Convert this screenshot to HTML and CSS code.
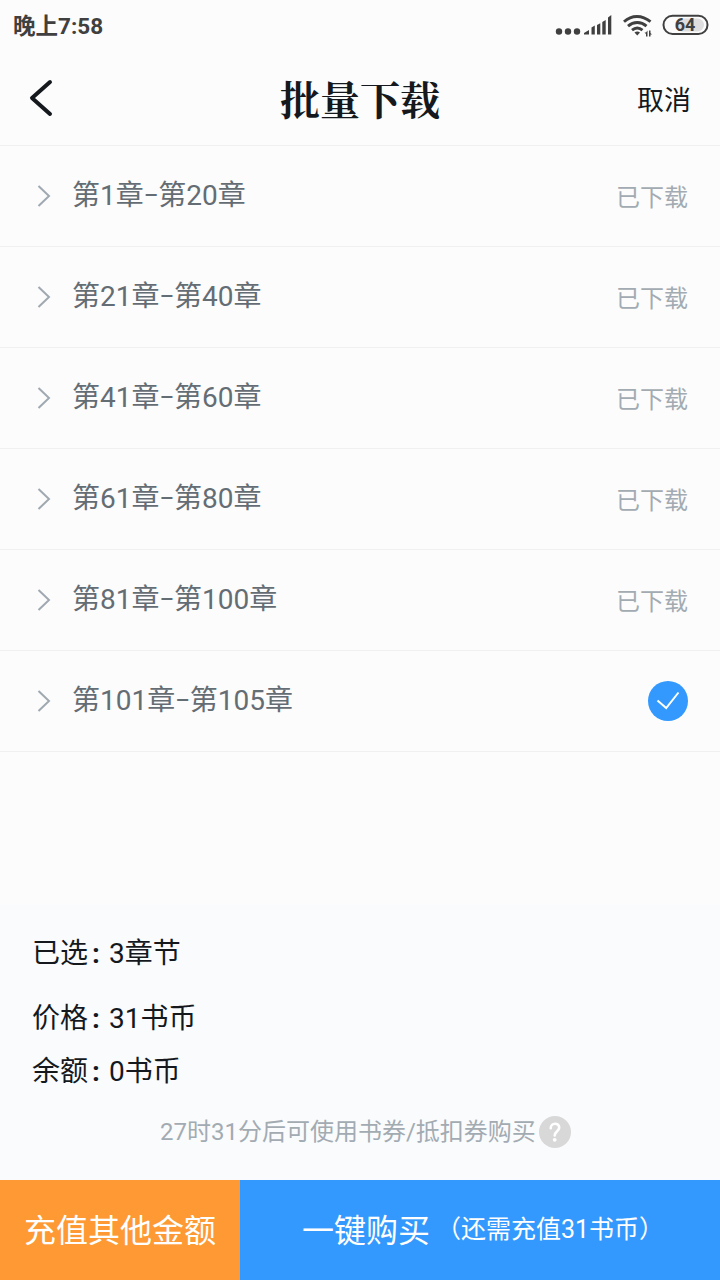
FILE: index.html
```
<!DOCTYPE html>
<html lang="zh-CN">
<head>
    <meta charset="UTF-8">
    <meta name="viewport" content="width=device-width, initial-scale=1.0">
    <title>批量下载</title>
    <link rel="stylesheet" href="styles.css">
</head>
<body>
    <div class="status-bar">
        <span class="time">晚上7:58</span>
        <svg class="status-icons" width="156" height="28" viewBox="0 0 156 28" fill="#404040">
            <!-- dots -->
            <circle cx="6" cy="19.500" r="3.200"/>
            <circle cx="15" cy="19.500" r="3.200"/>
            <circle cx="24" cy="19.500" r="3.200"/>
            <!-- signal -->
            <path d="M31 22.500v-1.500l5-3v4.500zM38.500 22.500v-7l3.300-2v9zM44 22.500v-9.500l3.300-1.800v11.300zM49.300 22.500v-12.500l3.400-2v14.500zM55 22.500v-17l3.300-2.500v19.500z"/>
            <!-- wifi -->
            <g fill="none" stroke="#404040" stroke-width="2.900">
                <path d="M71 9.700c7.700-7 18-7 26.500 0"/>
                <path d="M75 14.100c5.500-4.900 13-4.900 18.500 0"/>
                <path d="M79 18.200c3.300-2.800 7.200-2.800 10.500 0"/>
            </g>
            <path d="M81.500 20.500c1.700-1.300 3.800-1.300 5.500 0l-2.700 3z"/>
            <path d="M94.500 18.500v6H93v-2.500l-1.500-1.500H93zM96 24.500v-6h1.500V21l1.500 1.500h-1.500v2z"/>
            <!-- battery -->
            <rect x="122" y="6.500" width="29" height="13" rx="6.500" fill="#dedede"/>
            <rect x="110.500" y="3.700" width="44" height="18.300" rx="9.100" fill="none" stroke="#404040" stroke-width="2"/>
            <text class="battery-text" x="132" y="19" text-anchor="middle">64</text>
        </svg>
    </div>

    <header class="header">
        <svg class="back" width="24" height="38" viewBox="0 0 24 38" fill="none" stroke="#15191d" stroke-width="4" stroke-linecap="round" stroke-linejoin="round">
            <path d="M21 3L3 19l18 16"/>
        </svg>
        <h1>批量下载</h1>
        <span class="cancel">取消</span>
    </header>

    <ul class="chapters">
        <li>
            <svg class="arrow" viewBox="0 0 14 22"><path d="M1.500 1L12 11 1.500 21"/></svg>
            <span class="range">第1章<i>–</i>第20章</span>
            <span class="state">已下载</span>
        </li>
        <li>
            <svg class="arrow" viewBox="0 0 14 22"><path d="M1.500 1L12 11 1.500 21"/></svg>
            <span class="range">第21章<i>–</i>第40章</span>
            <span class="state">已下载</span>
        </li>
        <li>
            <svg class="arrow" viewBox="0 0 14 22"><path d="M1.500 1L12 11 1.500 21"/></svg>
            <span class="range">第41章<i>–</i>第60章</span>
            <span class="state">已下载</span>
        </li>
        <li>
            <svg class="arrow" viewBox="0 0 14 22"><path d="M1.500 1L12 11 1.500 21"/></svg>
            <span class="range">第61章<i>–</i>第80章</span>
            <span class="state">已下载</span>
        </li>
        <li>
            <svg class="arrow" viewBox="0 0 14 22"><path d="M1.500 1L12 11 1.500 21"/></svg>
            <span class="range">第81章<i>–</i>第100章</span>
            <span class="state">已下载</span>
        </li>
        <li>
            <svg class="arrow" viewBox="0 0 14 22"><path d="M1.500 1L12 11 1.500 21"/></svg>
            <span class="range">第101章<i>–</i>第105章</span>
            <svg class="checked" width="40" height="40" viewBox="0 0 40 40">
                <circle cx="20" cy="20" r="20" fill="#3399ff"/>
                <path d="M9.500 19.500l8.700 7.500L30.500 11.500" fill="none" stroke="#fff" stroke-width="2"/>
            </svg>
        </li>
    </ul>

    <section class="summary">
        <p class="selected">已选<b>:</b>3章节</p>
        <p class="price">价格<b>:</b>31书币</p>
        <p class="balance">余额<b>:</b>0书币</p>
        <div class="hint">
            <span>27时31分后可使用书券/抵扣券购买</span>
            <svg width="32" height="32" viewBox="0 0 32 32">
                <circle cx="16" cy="16" r="16" fill="#d8d8d8"/>
                <path d="M11.700 12.300c0-6 8.800-5.800 8.500-.4-.2 3.300-4.500 3.400-4.500 7.600" fill="none" stroke="#fff" stroke-width="2.600" stroke-linecap="round"/>
                <circle cx="15.700" cy="23.800" r="1.900" fill="#fff"/>
            </svg>
        </div>
    </section>

    <footer class="actions">
        <div class="recharge">充值其他金额</div>
        <div class="buy">一键购买<small>（还需充值31书币）</small></div>
    </footer>
</body>
</html>
```
FILE: styles.css
```
* {
    box-sizing: border-box;
}

body {
    margin: 0;
    height: 1280px;
    display: flex;
    flex-direction: column;
    background-color: #fcfcfc;
    color: #15191d;
    font-family: Roboto, "Noto Sans CJK SC", sans-serif;
    font-size: 28px;
    font-weight: 400;
    white-space: nowrap;
    overflow: hidden;
}

.status-bar {
    height: 50px;
    display: flex;
    justify-content: space-between;
    padding: 12px 11px 0 13px;
    color: #404040;
}

.time {
    font-size: 22.5px;
    font-weight: 700;
    line-height: 28px;
}

.battery-text {
    font-family: Roboto, sans-serif;
    font-size: 18px;
    font-weight: 700;
}

.header {
    height: 96px;
    display: grid;
    grid-template-columns: 1fr auto 1fr;
    align-items: center;
    padding: 0 29px;
    border-bottom: 1px solid #f0f0f0;
}

.header h1 {
    margin: 0;
    font-family: "Noto Serif CJK SC", "Noto Sans CJK SC", serif;
    font-size: 40px;
    font-weight: 700;
    line-height: 56px;
}

.cancel {
    margin-top: 6px;
    justify-self: end;
    font-size: 27px;
    line-height: 40px;
}

.chapters {
    list-style: none;
    margin: 0;
    padding: 0;
}

.chapters li {
    height: 101px;
    display: flex;
    align-items: center;
    padding: 0 32px 0 37px;
    border-bottom: 1px solid #f0f0f0;
}

.arrow {
    width: 14px;
    height: 22px;
    margin-right: 21px;
    fill: none;
    stroke: #a0a9b1;
    stroke-width: 2;
}

.range {
    flex: 1;
    color: #656d74;
    line-height: 40px;
}

.range i {
    display: inline-block;
    width: 14.5px;
    font-size: 22px;
    font-style: normal;
    font-weight: 500;
    line-height: 22px;
    text-align: center;
    vertical-align: 2px;
}

.state {
    margin-top: 3px;
    color: #a3abb2;
    font-size: 24px;
    line-height: 40px;
}

.summary {
    flex: 1;
    margin-top: 153px;
    padding: 29px 32px 0;
    background-color: #fafbfd;
}

.summary p {
    margin: 0;
    line-height: 40px;
}

.summary b {
    display: inline-block;
    width: 21px;
    padding-left: 4px;
    font-weight: 700;
}

.summary .price {
    margin-top: 25px;
}

.summary .balance {
    margin-top: 13px;
}

.hint {
    display: flex;
    align-items: center;
    gap: 4px;
    margin: 24px 0 0 128px;
    color: #a3abb2;
    font-size: 24px;
    line-height: 32px;
}

.hint span {
    width: 375px;
}

.actions {
    height: 100px;
    display: flex;
    color: #fff;
    font-size: 32px;
    line-height: 102px;
}

.recharge {
    width: 240px;
    background-color: #ff9933;
    text-align: center;
}

.buy {
    flex: 1;
    display: flex;
    padding-left: 62px;
    background-color: #3399ff;
}

.buy small {
    margin-left: 6px;
    font-size: 25px;
    line-height: 100px;
}
```
